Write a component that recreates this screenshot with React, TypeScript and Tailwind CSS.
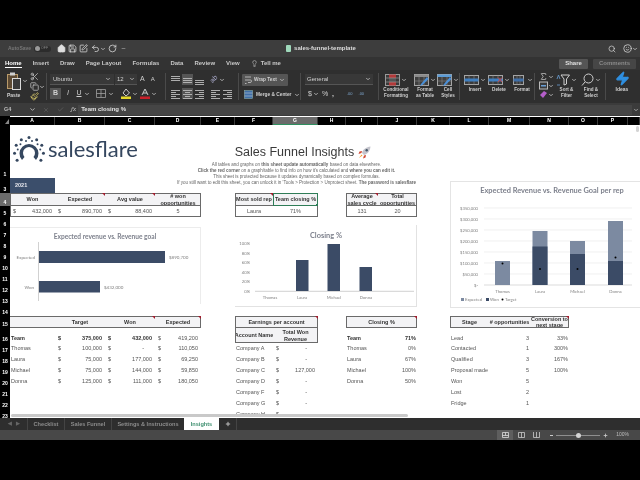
import { ChevronDown, Copy, Home, Lightbulb, Paintbrush, RotateCw, Save, Scissors, Search, Smile, SquarePen, Undo2, X, Check, Plus, Minus, Zap, Sigma } from "lucide-react";
import type { ReactNode } from "react";

const sheetFont = { fontFamily: '"Liberation Sans", Arial, sans-serif' };
const chartFont = '"Lato", "Open Sans", sans-serif';

function Caret({ className = "" }: { className?: string }) {
  return <ChevronDown size={6} strokeWidth={3} className={`shrink-0 text-[#cfcfcf] ${className}`} />;
}

function Sep() {
  return <div className="my-[3px] w-px shrink-0 bg-[#4a4a4a]" />;
}

function Lines({ kind, on }: { kind: "left" | "center" | "right" | "top" | "mid" | "bottom"; on?: boolean }) {
  const ys = kind === "top" ? [1, 3, 5] : kind === "bottom" ? [5, 7, 9] : kind === "mid" ? [3, 5, 7] : [1, 3, 5, 7, 9];
  const short = ["left", "center", "right"].includes(kind);
  return (
    <div className={`flex h-[11px] w-[11px] items-center justify-center ${on ? "bg-[#555]" : ""}`}>
      <svg width="9" height="10" viewBox="0 0 9 10">
        {ys.map((y, i) => {
          const w = short && i % 2 === 1 ? 5 : 9;
          const x = kind === "center" ? (9 - w) / 2 : kind === "right" ? 9 - w : 0;
          return <rect key={y} x={x} y={y} width={w} height="0.9" fill="#bdbdbd" />;
        })}
      </svg>
    </div>
  );
}

function SheetIcon({ kind }: { kind: "cond" | "table" | "style" | "insert" | "delete" | "format" }) {
  if (kind === "cond") {
    return (
      <svg width="15" height="12" viewBox="0 0 15 12">
        <rect x="0.5" y="0.5" width="14" height="11" fill="#3a3a3a" stroke="#9a9a9a" />
        <rect x="4" y="0.5" width="7" height="11" fill="#b33a3a" />
        <rect x="4" y="4" width="7" height="4" fill="#555" />
        <path d="M0.5 4H14.5M0.5 8H14.5" stroke="#9a9a9a" strokeWidth="0.7" />
      </svg>
    );
  }
  if (kind === "table" || kind === "style") {
    return (
      <svg width="15" height="12" viewBox="0 0 15 12">
        <rect x="0.5" y="0.5" width="14" height="11" fill="#3f3f3f" stroke="#a5a5a5" />
        <rect x="0.5" y="0.5" width="14" height="2.5" fill={kind === "table" ? "#8a8a8a" : "#5b9bd5"} />
        <path d="M5 3V11.5M10 3V11.5M0.5 7H14.5" stroke="#888" strokeWidth="0.6" />
        <path d="M13 3L7 10L6 12L8.5 11L14.5 5Z" fill="#4a90d9" />
      </svg>
    );
  }
  return (
    <svg width="15" height="12" viewBox="0 0 15 12">
      <rect x={kind === "format" ? 2.5 : 0.5} y="1.5" width={kind === "format" ? 10 : 14} height="9" fill="#3a3a3a" stroke="#a5a5a5" />
      <path d={kind === "format" ? "M6 1.5V10.5M9 1.5V10.5" : "M5 1.5V10.5M10 1.5V10.5"} stroke="#888" strokeWidth="0.6" />
      <rect x={kind === "format" ? 2.5 : 0.5} y="4.5" width={kind === "format" ? 10 : 14} height="3" fill={kind === "format" ? "#3f6fa8" : "#3f7fc0"} />
      {kind === "delete" && <path d="M10 3.5L14 8M14 3.5L10 8" stroke="#c44" strokeWidth="1" />}
    </svg>
  );
}

function BigButton({ icon, label, w }: { icon: ReactNode; label: ReactNode; w: string }) {
  return (
    <div className={`flex flex-col items-center ${w}`}>
      <div className="flex h-[15px] items-center gap-[1px]">
        {icon}
        <Caret />
      </div>
      <div className="text-center text-[4.6px] leading-[5.5px] font-bold text-[#cfcfcf]">{label}</div>
    </div>
  );
}

function Ribbon() {
  return (
    <div className="flex h-[33px] shrink-0 overflow-hidden bg-[#2f2f2f] text-[#d0d0d0]">
      {/* clipboard */}
      <div className="flex w-[46px] shrink-0 pl-[7px]">
        <div className="flex w-[23px] flex-col">
          <div className="flex h-[22px] items-center">
            <svg width="14" height="18" viewBox="0 0 14 18">
              <rect x="0.5" y="2.5" width="10" height="14" fill="#5d4a33" stroke="#b89a6a" />
              <rect x="3" y="0.5" width="5" height="3" fill="#cfcfcf" />
              <rect x="5.5" y="6.5" width="8" height="11" fill="#3a3a3a" stroke="#dadada" />
            </svg>
            <Caret className="ml-[1px]" />
          </div>
          <div className="text-[5px] leading-[6px] font-bold">Paste</div>
        </div>
        <div className="flex flex-col gap-[1px] pt-[2px] text-[#c4c4c4]">
          <Scissors size={9} />
          <div className="flex items-center">
            <Copy size={9} />
            <Caret />
          </div>
          <Paintbrush size={9} className="text-[#d9c96a]" />
        </div>
      </div>
      <Sep />
      {/* font */}
      <div className="flex w-[118px] shrink-0 flex-col gap-[3px] pt-[4px] pl-[3px]">
        <div className="flex items-center">
          <div className="flex h-[11px] w-[64px] items-center justify-between border-b border-[#555] bg-[#383838] px-[3px] text-[6px]">
            Ubuntu
            <Caret />
          </div>
          <div className="ml-[1px] flex h-[11px] w-[22px] items-center justify-between border-b border-[#555] bg-[#383838] px-[2px] text-[6px]">
            12
            <Caret />
          </div>
          <span className="ml-[3px] text-[7px]">A</span>
          <span className="ml-[6px] text-[6px]">A</span>
        </div>
        <div className="flex items-center text-[7px]">
          <span className="flex h-[11px] w-[11px] items-center justify-center bg-[#555] font-bold">B</span>
          <span className="ml-[3px] w-[8px] text-center italic">I</span>
          <span className="ml-[3px] w-[8px] text-center underline">U</span>
          <Caret className="ml-[1px]" />
          <svg width="10" height="9" viewBox="0 0 10 9" className="ml-[6px]">
            <path d="M0.5 0.5H9.5V8.5H0.5ZM5 0.5V8.5M0.5 4.5H9.5" fill="none" stroke="#a0a0a0" strokeWidth="0.8" />
          </svg>
          <Caret className="ml-[2px]" />
          <svg width="10" height="11" viewBox="0 0 10 11" className="ml-[7px]">
            <path d="M2 5L5 1L8.5 5L5 8Z" fill="none" stroke="#c8c8c8" />
            <rect x="0" y="8.5" width="10" height="2.5" fill="#e6d92c" />
          </svg>
          <Caret className="ml-[1px]" />
          <svg width="10" height="11" viewBox="0 0 10 11" className="ml-[2px]">
            <path d="M2 7L5 1L8 7M3 5H7" fill="none" stroke="#c8c8c8" />
            <rect x="0" y="8.5" width="10" height="2.5" fill="#c8202a" />
          </svg>
          <Caret className="ml-[1px]" />
        </div>
      </div>
      <Sep />
      {/* alignment */}
      <div className="flex w-[72px] shrink-0 flex-col gap-[3px] pt-[4px] pl-[4px]">
        <div className="flex items-center gap-[1px]">
          <Lines kind="top" />
          <Lines kind="mid" on />
          <Lines kind="bottom" />
          <div className="ml-[4px] flex items-center text-[7px] text-[#a9a9c9]">
            <span className="-rotate-45">ab</span>
            <Caret className="ml-[1px]" />
          </div>
        </div>
        <div className="flex items-center gap-[1px]">
          <Lines kind="left" />
          <Lines kind="center" on />
          <Lines kind="right" />
          <div className="ml-[4px]">
            <Lines kind="left" />
          </div>
          <Lines kind="right" />
        </div>
      </div>
      <Sep />
      {/* wrap and merge */}
      <div className="flex w-[61px] shrink-0 flex-col gap-[3px] pt-[4px] pl-[3px] text-[4.8px] font-bold whitespace-nowrap">
        <div className="flex h-[12px] w-[46px] items-center gap-[2px] rounded-[1px] bg-[#555] px-[2px]">
          <svg width="8" height="9" viewBox="0 0 8 9" className="shrink-0">
            <path d="M1 1H7M1 4H6.5Q7.5 4 7.5 5.2T6 6.5H4M1 7.5H2.5" fill="none" stroke="#ccc" strokeWidth="0.8" />
          </svg>
          Wrap Text
          <Caret />
        </div>
        <div className="flex h-[11px] items-center gap-[3px] pl-[2px]">
          <svg width="9" height="9" viewBox="0 0 9 9" className="shrink-0">
            <rect x="0.5" y="0.5" width="8" height="8" fill="#3f6fa8" stroke="#8aa" strokeWidth="0.6" />
            <path d="M0.5 3H8.5M0.5 6H8.5" stroke="#ddd" strokeWidth="0.5" />
          </svg>
          Merge &amp; Center
          <Caret />
        </div>
      </div>
      <Sep />
      {/* number */}
      <div className="flex w-[77px] shrink-0 flex-col gap-[4px] pt-[4px] pl-[4px] text-[6px]">
        <div className="flex h-[11px] w-[68px] items-center justify-between border-b border-[#555] bg-[#383838] px-[2px]">
          General
          <Caret />
        </div>
        <div className="flex items-center text-[7px]">
          <span className="ml-[3px] w-[4px]">$</span>
          <Caret className="ml-[1px]" />
          <span className="ml-[3px] w-[7px]">%</span>
          <span className="ml-[3px] font-bold">,</span>
          <span className="ml-[13px] text-[4px] text-[#7fa8d0]">.00</span>
          <span className="ml-[6px] text-[4px] text-[#7fa8d0]">.00</span>
        </div>
      </div>
      <Sep />
      {/* styles */}
      <div className="flex w-[80px] shrink-0 pt-[2px]">
        <BigButton w="w-[34px]" icon={<SheetIcon kind="cond" />} label={<>Conditional<br />Formatting</>} />
        <BigButton w="w-[24px]" icon={<SheetIcon kind="table" />} label={<>Format<br />as Table</>} />
        <BigButton w="w-[22px]" icon={<SheetIcon kind="style" />} label={<>Cell<br />Styles</>} />
      </div>
      <Sep />
      {/* cells */}
      <div className="flex w-[74px] shrink-0 pt-[2px] pl-[3px]">
        <BigButton w="w-[24px]" icon={<SheetIcon kind="insert" />} label="Insert" />
        <BigButton w="w-[24px]" icon={<SheetIcon kind="delete" />} label="Delete" />
        <BigButton w="w-[22px]" icon={<SheetIcon kind="format" />} label="Format" />
      </div>
      <Sep />
      {/* editing */}
      <div className="flex w-[70px] shrink-0 pt-[2px] pl-[4px]">
        <div className="flex w-[15px] flex-col text-[#c4c4c4]">
          <div className="flex items-center"><Sigma size={9} /><Caret /></div>
          <div className="flex items-center">
            <svg width="9" height="9" viewBox="0 0 9 9"><rect x="0.5" y="1" width="8" height="7" fill="#3a3a3a" stroke="#bbb" /><rect x="2" y="4" width="5" height="1.5" fill="#6a9fd5" /></svg>
            <Caret />
          </div>
          <div className="flex items-center">
            <svg width="9" height="9" viewBox="0 0 9 9"><path d="M1 5L5 1L8 3L4 8Z" fill="#b45ec9" /></svg>
            <Caret />
          </div>
        </div>
        <BigButton w="w-[25px]" icon={<svg width="14" height="12" viewBox="0 0 14 12"><path d="M5 1H13.5L10.5 5V10L8 11V5Z" fill="none" stroke="#cfcfcf" /><path d="M1 5L2.5 1L4 5M1 11H4" fill="none" stroke="#6a9fd5" strokeWidth="0.8" /></svg>} label={<>Sort &amp;<br />Filter</>} />
        <BigButton w="w-[24px]" icon={<svg width="13" height="13" viewBox="0 0 13 13"><circle cx="7.5" cy="5.5" r="4.5" fill="none" stroke="#cfcfcf" /><path d="M4 9L1 12.5" stroke="#cfcfcf" /></svg>} label={<>Find &amp;<br />Select</>} />
      </div>
      <Sep />
      <div className="flex w-[32px] flex-col items-center pt-[1px] text-[5px] font-bold">
        <Zap size={15} className="h-[15px] text-[#2f8fe0]" fill="#2f8fe0" />
        Ideas
      </div>
    </div>
  );
}

function TopChrome() {
  return (
    <>
      <div className="flex h-[17px] shrink-0 items-center bg-[#3d3d3d] text-[#dedede]">
        <span className="ml-[8px] text-[5px] font-bold text-[#777]">AutoSave</span>
        <div className="ml-[3px] flex h-[6px] w-[17px] items-center rounded-full bg-[#2c2c2c] pl-[1px]">
          <div className="h-[5px] w-[5px] rounded-full bg-[#9a9a9a]" />
          <span className="ml-[1px] text-[3.5px] text-[#888]">OFF</span>
        </div>
        <Home size={9} className="ml-[6px]" fill="#dedede" />
        <Save size={9} className="ml-[2px]" />
        <SquarePen size={9} className="ml-[2px]" />
        <Undo2 size={9} className="ml-[3px]" />
        <Caret />
        <RotateCw size={9} className="ml-[2px]" />
        <Minus size={5} className="ml-[4px]" />
        <div className="ml-[160px] flex items-center gap-[3px] text-[6px] font-bold">
          <div className="h-[7px] w-[5px] rounded-[1px] bg-[#9fd9bb]" />
          sales-funnel-template
        </div>
        <Search size={8} className="ml-[252px]" />
        <Smile size={9} className="ml-[7px]" />
        <Caret />
      </div>
      <div className="flex h-[13px] shrink-0 items-center gap-[11px] bg-[#333] pl-[5px] text-[6px] font-bold text-[#c8c8c8]">
        <span className="border-b border-white leading-[8px] text-white">Home</span>
        <span>Insert</span>
        <span>Draw</span>
        <span>Page Layout</span>
        <span>Formulas</span>
        <span>Data</span>
        <span>Review</span>
        <span>View</span>
        <span className="flex items-center gap-[3px]">
          <Lightbulb size={7} />
          Tell me
        </span>
        <div className="ml-auto mr-[4px] flex gap-[5px]">
          <span className="flex h-[10px] w-[29px] items-center justify-center rounded-[1px] bg-[#555] text-[#e0e0e0]">Share</span>
          <span className="flex h-[10px] w-[43px] items-center justify-center rounded-[1px] bg-[#464646] text-[#8a8a8a]">Comments</span>
        </div>
      </div>
      <Ribbon />
      <div className="flex h-[13px] shrink-0 items-center bg-[#3b3b3b] text-[#bdbdbd]">
        <span className="w-[29px] pl-[4px] text-[5.5px] font-bold">G4</span>
        <ChevronDown size={7} strokeWidth={3} />
        <X size={6} className="ml-[7px] text-[#6d6d6d]" />
        <Check size={7} className="ml-[8px] text-[#6d6d6d]" />
        <span className="ml-[7px] font-serif text-[7px] italic">fx</span>
        <div className="ml-[2px] flex h-[10px] flex-1 items-center bg-[#454545] pl-[3px] text-[6px] font-bold text-[#e2e2e2]">Team closing %</div>
        <ChevronDown size={6} strokeWidth={3} className="mx-[1px]" />
      </div>
    </>
  );
}

function Tri() {
  return <div className="absolute top-0 right-0 z-20 h-0 w-0 border-t-[3px] border-l-[3px] border-t-[#a11c2d] border-l-transparent" />;
}

function Logo() {
  const outer = [-90, -58, -28, 5, 35, -122, -152, -185, -215];
  const inner = [-75, -42, -12, -105, -138, -168];
  return (
    <div className="col-span-4 col-start-2 row-start-2 flex items-start pt-[9px] pl-[3px]">
      <svg width="32" height="32" viewBox="0 0 32 32" className="shrink-0">
        <path d="M9 26A9.5 9.5 0 1 1 23 26L20.5 23A6 6 0 1 0 11.5 23Z" fill="#35475f" />
        {outer.map((a) => (
          <circle key={a} cx={16 + 14.5 * Math.cos((a * Math.PI) / 180)} cy={18 + 14.5 * Math.sin((a * Math.PI) / 180)} r="1.5" fill="#35475f" />
        ))}
        {inner.map((a) => (
          <circle key={a} cx={16 + 11.5 * Math.cos((a * Math.PI) / 180)} cy={18 + 11.5 * Math.sin((a * Math.PI) / 180)} r="1" fill="#35475f" />
        ))}
      </svg>
      <span className="mt-[2px] ml-[3px] text-[22px] leading-[26px] text-[#35475f]" style={{ fontFamily: chartFont }}>
        salesflare
      </span>
    </div>
  );
}

function Intro() {
  return (
    <div className="col-span-9 col-start-4 row-span-2 row-start-2 pt-[17px] pl-[38px] text-center text-[4.5px] leading-[6px] whitespace-nowrap text-[#666]">
      <div className="flex h-[20px] items-center justify-center gap-[4px] pl-[13px] text-[12.5px] text-[#3a3a3a]">
        Sales Funnel Insights
        <svg width="13" height="13" viewBox="0 0 13 13">
          <path d="M4 7C5 3 8.5 1 12.5 0.5C12 4.5 10 8 6 9Z" fill="#c4c4cc" />
          <circle cx="8.7" cy="4.3" r="1.2" fill="#456" />
          <path d="M4 5L1.5 5.5L0.5 8L3.5 7ZM8 9L7.5 11.5L5 12.5L6 9.5Z" fill="#d24a35" />
          <path d="M3.5 8.5L1 12L4.5 9.5Z" fill="#f0a030" />
        </svg>
      </div>
      <div>All tables and graphs on <b>this sheet update automatically</b> based on data elsewhere.</div>
      <div><b>Click the red corner</b> on a graph/table to find info on how it's calculated and <b>where you can edit it.</b></div>
      <div>This sheet is protected because it updates dynamically based on complex formulas.</div>
      <div>If you still want to edit this sheet, you can unlock it in 'Tools &gt; Protection &gt; Unprotect sheet. <b>The password is salesflare</b></div>
    </div>
  );
}

function Money({ v, bold }: { v: string; bold?: boolean }) {
  return (
    <div className={`flex h-full justify-between pr-[3px] pl-[3px] ${bold ? "items-end font-bold" : "items-center"}`}>
      <span>$</span>
      <span className={v === "-" ? "pr-[8px]" : ""}>{v}</span>
    </div>
  );
}

function ChartOne() {
  return (
    <div className="col-span-4 col-start-2 row-span-8 row-start-7 mt-[-1px] mb-[12px] border-t border-r border-[#ececec]">
      <svg width="190" height="77" viewBox="10 227 190 77" fontFamily={chartFont}>
        <text x="105" y="238" textAnchor="middle" fontSize="6.6" fontWeight="700" fill="#7d808c">Expected revenue vs. Revenue goal</text>
        <path d="M38.5 241V300" stroke="#bdbdbd" strokeWidth="0.7" />
        <rect x="39" y="250" width="126" height="12" fill="#3b4b66" />
        <rect x="39" y="280" width="61" height="11.5" fill="#3b4b66" />
        <g fontSize="4.5" fill="#808080">
          <text x="35" y="257.5" textAnchor="end">Expected</text>
          <text x="34" y="287.5" textAnchor="end">Won</text>
          <text x="169" y="257.5">$890,700</text>
          <text x="104" y="287.5">$432,000</text>
        </g>
      </svg>
    </div>
  );
}

function ChartTwo() {
  const ticks: [string, number][] = [["100%", 243.5], ["80%", 253], ["60%", 262.5], ["40%", 272], ["20%", 281.5], ["0%", 291]];
  return (
    <div className="col-span-5 col-start-7 row-span-9 row-start-6 mt-[8px] mb-[9px] border-r border-b border-[#e2e2e2]">
      <svg width="183" height="81" viewBox="234 225 183 81" fontFamily={chartFont}>
        <text x="325" y="238" textAnchor="middle" fontSize="7.4" fontWeight="700" fill="#7d808c">Closing %</text>
        <g fontSize="4.2" fill="#808080">
          {ticks.map(([t, y]) => (
            <text key={t} x="249" y={y + 1.5} textAnchor="end">{t}</text>
          ))}
          <text x="269" y="298.5" textAnchor="middle">Thomas</text>
          <text x="301" y="298.5" textAnchor="middle">Laura</text>
          <text x="333" y="298.5" textAnchor="middle">Michael</text>
          <text x="365" y="298.5" textAnchor="middle">Donna</text>
        </g>
        <path d="M254 291.3H413" stroke="#bdbdbd" strokeWidth="0.7" />
        <rect x="295" y="260" width="12.5" height="31" fill="#3b4b66" />
        <rect x="326.5" y="244" width="12.5" height="47" fill="#3b4b66" />
        <rect x="358.5" y="267" width="12.5" height="24" fill="#3b4b66" />
      </svg>
    </div>
  );
}

function ChartThree() {
  const ticks: [string, number][] = [["$350,000", 208], ["$300,000", 219], ["$250,000", 230], ["$200,000", 241], ["$150,000", 252], ["$100,000", 263], ["$50,000", 274], ["$-", 285]];
  const bars = [
    { n: "Thomas", x: 495, top: 261, won: 285, dot: 263.5 },
    { n: "Laura", x: 532.5, top: 231, won: 246.5, dot: 269 },
    { n: "Michael", x: 570, top: 241, won: 254, dot: 269 },
    { n: "Donna", x: 608, top: 221, won: 261, dot: 257.5 },
  ];
  return (
    <div className="col-span-6 col-start-13 row-span-12 row-start-3 mt-[3px] mb-[8px] border-t border-b border-l border-[#e4e4e4]">
      <svg width="189" height="125" viewBox="451 182 189 125" fontFamily={chartFont}>
        <text x="552" y="193" textAnchor="middle" fontSize="7.4" fontWeight="700" fill="#7d808c">Expected Revenue vs. Revenue Goal per rep</text>
        {ticks.map(([t, y]) => (
          <g key={t}>
            <text x="478" y={y + 1.5} textAnchor="end" fontSize="4.2" fill="#808080">{t}</text>
            <path d={`M484 ${y}H632`} stroke={y === 285 ? "#c4c4c4" : "#e6e6e6"} strokeWidth="0.6" />
          </g>
        ))}
        {bars.map((b) => (
          <g key={b.n}>
            <rect x={b.x} y={b.top} width="15" height={285 - b.top} fill="#7c8aa1" />
            <rect x={b.x} y={b.won} width="15" height={285 - b.won} fill="#3b4b66" />
            <circle cx={b.x + 7.5} cy={b.dot} r="1" fill="#000" />
            <text x={b.x + 7.5} y="293" textAnchor="middle" fontSize="4.2" fill="#808080">{b.n}</text>
          </g>
        ))}
        <g fontSize="4.2" fill="#808080">
          <rect x="461" y="298" width="3" height="3" fill="#7c8aa1" />
          <text x="465" y="301">Expected</text>
          <rect x="486" y="298" width="3" height="3" fill="#3b4b66" />
          <text x="490" y="301">Won</text>
          <circle cx="502.5" cy="299.5" r="1" fill="#000" />
          <text x="505" y="301">Target</text>
        </g>
      </svg>
    </div>
  );
}

function Sheet() {
  const cols = [
    ["A", "col-start-2"], ["B", "col-start-3"], ["C", "col-start-4"], ["D", "col-start-5"], ["E", "col-start-6"], ["F", "col-start-7"],
    ["G", "col-start-8"], ["H", "col-start-9"], ["I", "col-start-10"], ["J", "col-start-11"], ["K", "col-start-12"], ["L", "col-start-13"],
    ["M", "col-start-14"], ["N", "col-start-15"], ["O", "col-start-16"], ["P", "col-start-17"], ["", "col-start-18"],
  ];
  const rowHeads = [
    ["1", "row-start-2"], ["3", "row-start-3"], ["4", "row-start-4"], ["5", "row-start-5"], ["6", "row-start-6"], ["7", "row-start-7"],
    ["8", "row-start-8"], ["9", "row-start-9"], ["10", "row-start-10"], ["11", "row-start-11"], ["12", "row-start-12"], ["13", "row-start-13"],
    ["14", "row-start-14"], ["15", "row-start-15"], ["16", "row-start-16"], ["17", "row-start-17"], ["18", "row-start-18"], ["19", "row-start-19"],
    ["20", "row-start-20"], ["21", "row-start-21"], ["22", "row-start-22"], ["23", "row-start-23"],
  ];
  const reps = [
    { name: "Thomas", row: "row-start-17", t: "100,000", w: "-", e: "110,050", c: "0%" },
    { name: "Laura", row: "row-start-18", t: "75,000", w: "177,000", e: "69,250", c: "67%" },
    { name: "Michael", row: "row-start-19", t: "75,000", w: "144,000", e: "59,850", c: "100%" },
    { name: "Donna", row: "row-start-20", t: "125,000", w: "111,000", e: "180,050", c: "50%" },
  ];
  const companies = [
    { n: "Company A", row: "row-start-17", v: "-" },
    { n: "Company B", row: "row-start-18", v: "-" },
    { n: "Company C", row: "row-start-19", v: "127,000" },
    { n: "Company D", row: "row-start-20", v: "-" },
    { n: "Company F", row: "row-start-21", v: "-" },
    { n: "Company G", row: "row-start-22", v: "-" },
    { n: "Company H", row: "row-start-23", v: "-" },
  ];
  const stages = [
    { n: "Lead", row: "row-start-16", o: "3", p: "33%" },
    { n: "Contacted", row: "row-start-17", o: "1", p: "300%" },
    { n: "Qualified", row: "row-start-18", o: "3", p: "167%" },
    { n: "Proposal made", row: "row-start-19", o: "5", p: "100%" },
    { n: "Won", row: "row-start-20", o: "5", p: "" },
    { n: "Lost", row: "row-start-21", o: "2", p: "" },
    { n: "Fridge", row: "row-start-22", o: "1", p: "" },
  ];
  const head = "relative flex items-center justify-center bg-[#f3f3f5] text-center font-bold leading-[6.5px] text-[#333]";
  const val = "flex items-center";
  const box = "z-10 border-[#6a6a6a]";
  return (
    <div className="relative h-[302px] shrink-0 overflow-hidden bg-white text-[5.5px] text-[#555]" style={sheetFont}>
      <div className="grid grid-cols-[10px_45px_50px_50px_46px_34px_38px_45px_28px_32px_39px_33px_39px_41px_39px_29px_30px_12px] grid-rows-[9px_53px_15px_13px_11px_repeat(9,11px)_12px_15px_repeat(7,11px)]">
        <div className="col-start-1 row-span-23 row-start-1 bg-black" />
        <div className="col-span-18 col-start-1 row-start-1 mt-[1px] bg-black" />
        <div className="col-start-1 row-start-1 mt-[3px] ml-[5px] h-0 w-0 border-b-[5px] border-l-[4px] border-b-[#888] border-l-transparent" />
        {cols.map(([c, cls]) => (
          <div key={cls} className={`${cls} row-start-1 mt-[1px] flex items-center justify-center border-r border-[#3a3a3a] text-[5px] font-bold text-white ${c === "G" ? "border-b border-b-[#2f8f5f] bg-[#6b6b6b]" : ""}`}>
            {c}
          </div>
        ))}
        {rowHeads.map(([r, cls]) => (
          <div key={cls} className={`${cls} col-start-1 flex items-end justify-center pb-[1px] text-[5px] leading-[6px] font-bold text-white ${r === "4" ? "bg-[#6b6b6b]" : ""}`}>
            {r}
          </div>
        ))}

        <Logo />
        <Intro />
        <div className="col-start-2 row-start-3 flex items-center bg-[#3b4e6b] pl-[5px] font-bold text-[#e8e8ee]">2021</div>

        {/* won summary */}
        <div className={`${head} col-start-2 row-start-4`}>Won</div>
        <div className={`${head} col-start-3 row-start-4`}>Expected<Tri /></div>
        <div className={`${head} col-start-4 row-start-4`}>Avg value<Tri /></div>
        <div className={`${head} col-start-5 row-start-4`}># won opportunities</div>
        <div className="col-start-2 row-start-5"><Money v="432,000" /></div>
        <div className="col-start-3 row-start-5"><Money v="890,700" /></div>
        <div className="col-start-4 row-start-5"><Money v="88,400" /></div>
        <div className={`${val} col-start-5 row-start-5 justify-center`}>5</div>
        <div className={`${box} relative col-span-4 col-start-2 row-span-2 row-start-4 border`} />
        <div className={`${box} relative col-span-4 col-start-2 row-start-4 border-b`} />

        {/* top rep */}
        <div className={`${head} col-start-7 row-start-4 whitespace-nowrap`}>Most sold rep<Tri /></div>
        <div className={`${head} col-start-8 row-start-4 whitespace-nowrap`}>Team closing %</div>
        <div className={`${val} col-start-7 row-start-5 justify-center`}>Laura</div>
        <div className={`${val} col-start-8 row-start-5 justify-center`}>71%</div>
        <div className={`${box} relative col-span-2 col-start-7 row-span-2 row-start-4 border`} />
        <div className={`${box} relative col-span-2 col-start-7 row-start-4 border-b`} />
        <div className="relative z-10 col-start-8 row-start-4 border border-[#2f7d57]">
          <div className="absolute right-[-1px] bottom-[-1px] h-[2px] w-[2px] bg-[#2f7d57]" />
        </div>

        {/* cycle */}
        <div className={`${head} col-start-10 row-start-4`}>Average sales cycle<Tri /></div>
        <div className={`${head} col-start-11 row-start-4`}>Total opportunities</div>
        <div className={`${val} col-start-10 row-start-5 justify-center`}>131</div>
        <div className={`${val} col-start-11 row-start-5 justify-center`}>20</div>
        <div className={`${box} relative col-span-2 col-start-10 row-span-2 row-start-4 border`} />
        <div className={`${box} relative col-span-2 col-start-10 row-start-4 border-b`} />

        <ChartOne />
        <ChartTwo />
        <ChartThree />

        {/* targets */}
        <div className={`${head} col-start-2 row-start-15`} />
        <div className={`${head} col-start-3 row-start-15`}>Target</div>
        <div className={`${head} col-start-4 row-start-15`}>Won<Tri /></div>
        <div className={`${head} col-start-5 row-start-15`}>Expected<Tri /></div>
        <div className={`${box} relative col-span-4 col-start-2 row-start-15 border-t border-r border-b`} />
        <div className="col-start-2 row-start-16 flex items-end pb-[1px] pl-[1px] font-bold text-[#333]">Team</div>
        <div className="col-start-3 row-start-16 pb-[1px] text-[#333]"><Money v="375,000" bold /></div>
        <div className="col-start-4 row-start-16 pb-[1px] text-[#333]"><Money v="432,000" bold /></div>
        <div className="col-start-5 row-start-16 pb-[1px]"><div className="flex h-full items-end justify-between pr-[3px] pl-[3px]"><span>$</span><span>419,200</span></div></div>
        {reps.map((r) => (
          <div key={r.name} className="contents">
            <div className={`${val} ${r.row} col-start-2 pl-[1px]`}>{r.name}</div>
            <div className={`${r.row} col-start-3`}><Money v={r.t} /></div>
            <div className={`${r.row} col-start-4`}><Money v={r.w} /></div>
            <div className={`${r.row} col-start-5`}><Money v={r.e} /></div>
            <div className={`${val} ${r.row} col-start-10 pl-[1px]`}>{r.name}</div>
            <div className={`${val} ${r.row} col-start-11 justify-end pr-[1px]`}>{r.c}</div>
          </div>
        ))}

        {/* earnings */}
        <div className={`${head} col-span-2 col-start-7 row-start-15`}>Earnings per account<Tri /></div>
        <div className={`${head} col-start-7 row-start-16 whitespace-nowrap`}>Account Name</div>
        <div className={`${head} col-start-8 row-start-16`}>Total Won Revenue</div>
        <div className={`${box} relative col-span-2 col-start-7 row-start-15 border`} />
        <div className={`${box} relative col-span-2 col-start-7 row-start-16 border border-t-0`} />
        {companies.map((c) => (
          <div key={c.n} className="contents">
            <div className={`${val} ${c.row} col-start-7 pl-[1px]`}>{c.n}</div>
            <div className={`${c.row} col-start-8`}><Money v={c.v} /></div>
          </div>
        ))}

        {/* closing */}
        <div className={`${head} col-span-2 col-start-10 row-start-15`}>Closing %<Tri /></div>
        <div className={`${box} relative col-span-2 col-start-10 row-start-15 border`} />
        <div className="col-start-10 row-start-16 flex items-end pb-[1px] pl-[1px] font-bold text-[#333]">Team</div>
        <div className="col-start-11 row-start-16 flex items-end justify-end pr-[1px] pb-[1px] font-bold text-[#333]">71%</div>

        {/* stages */}
        <div className={`${head} col-start-13 row-start-15`}>Stage</div>
        <div className={`${head} col-start-14 row-start-15 whitespace-nowrap`}># opportunities</div>
        <div className={`${head} col-start-15 row-start-15`}>Conversion to next stage<Tri /></div>
        <div className={`${box} relative col-span-3 col-start-13 row-start-15 border`} />
        {stages.map((s) => (
          <div key={s.n} className="contents">
            <div className={`flex ${s.row === "row-start-16" ? "items-end pb-[1px]" : "items-center"} ${s.row} col-start-13 pl-[1px] whitespace-nowrap`}>{s.n}</div>
            <div className={`flex ${s.row === "row-start-16" ? "items-end pb-[1px]" : "items-center"} ${s.row} col-start-14 justify-end pr-[1px]`}>{s.o}</div>
            <div className={`flex ${s.row === "row-start-16" ? "items-end pb-[1px]" : "items-center"} ${s.row} col-start-15 justify-end pr-[1px]`}>{s.p}</div>
          </div>
        ))}
      </div>
      {/* overlay scrollbars */}
      <div className="absolute bottom-[1px] left-[11px] z-20 h-[3px] w-[397px] rounded-full bg-[#c9c9c9]" />
      <div className="absolute top-[10px] right-[1px] z-20 h-[6px] w-[3px] rounded-full bg-[#d4d4d4]" />
    </div>
  );
}

function BottomChrome() {
  return (
    <div style={sheetFont}>
      <div className="flex h-[12px] items-center bg-[#2e2e2e] text-[5.6px] font-bold text-[#8c8c8c]">
        <div className="flex w-[27px] items-center justify-center gap-[4px] text-[5px] text-[#666]">
          <span>◀</span>
          <span>▶</span>
        </div>
        <div className="h-full w-px bg-[#444]" />
        <span className="w-[36px] text-center">Checklist</span>
        <div className="h-full w-px bg-[#444]" />
        <span className="w-[46px] text-center">Sales Funnel</span>
        <div className="h-full w-px bg-[#444]" />
        <span className="w-[72px] text-center">Settings &amp; Instructions</span>
        <div className="flex h-full w-[35px] items-center justify-center bg-white text-[#3f9070]">Insights</div>
        <Plus size={6} strokeWidth={4} className="ml-[6px] text-[#bdbdbd]" />
        <div className="ml-[5px] h-full w-px bg-[#444]" />
      </div>
      <div className="flex h-[10px] items-center justify-end bg-[#484848] pr-[11px] text-[#c9c9c9]">
        <div className="flex h-full w-[16px] items-center justify-center bg-[#5e5e5e]">
          <svg width="7" height="6" viewBox="0 0 7 6"><path d="M0.5 0.5H6.5V5.5H0.5ZM0.5 3.5H6.5M3.5 0.5V3.5" fill="none" stroke="#ddd" strokeWidth="0.8" /></svg>
        </div>
        <svg width="7" height="6" viewBox="0 0 7 6" className="ml-[5px]"><path d="M0.5 0.5H6.5V5.5H0.5ZM3.5 0.5V5.5" fill="none" stroke="#ccc" strokeWidth="0.8" /></svg>
        <svg width="7" height="6" viewBox="0 0 7 6" className="ml-[8px]"><path d="M0.5 0V5.5H6.5V0M3.5 0V5.5" fill="none" stroke="#ccc" strokeWidth="0.8" /></svg>
        <div className="ml-[10px] h-[1px] w-[3px] bg-[#ccc]" />
        <div className="relative ml-[3px] h-[1px] w-[44px] bg-[#8f8f8f]">
          <div className="absolute top-[-2px] left-[20px] h-[5px] w-[5px] rounded-full bg-[#d4d4d4]" />
        </div>
        <Plus size={5} strokeWidth={4} className="ml-[3px]" />
        <span className="ml-[8px] text-[5px] text-[#bdbdbd]">100%</span>
      </div>
    </div>
  );
}

export default function App() {
  return (
    <div className="flex h-[480px] w-[640px] flex-col overflow-hidden bg-black pt-[40px] blur-[0.35px]" style={sheetFont}>
      <TopChrome />
      <Sheet />
      <BottomChrome />
    </div>
  );
}
